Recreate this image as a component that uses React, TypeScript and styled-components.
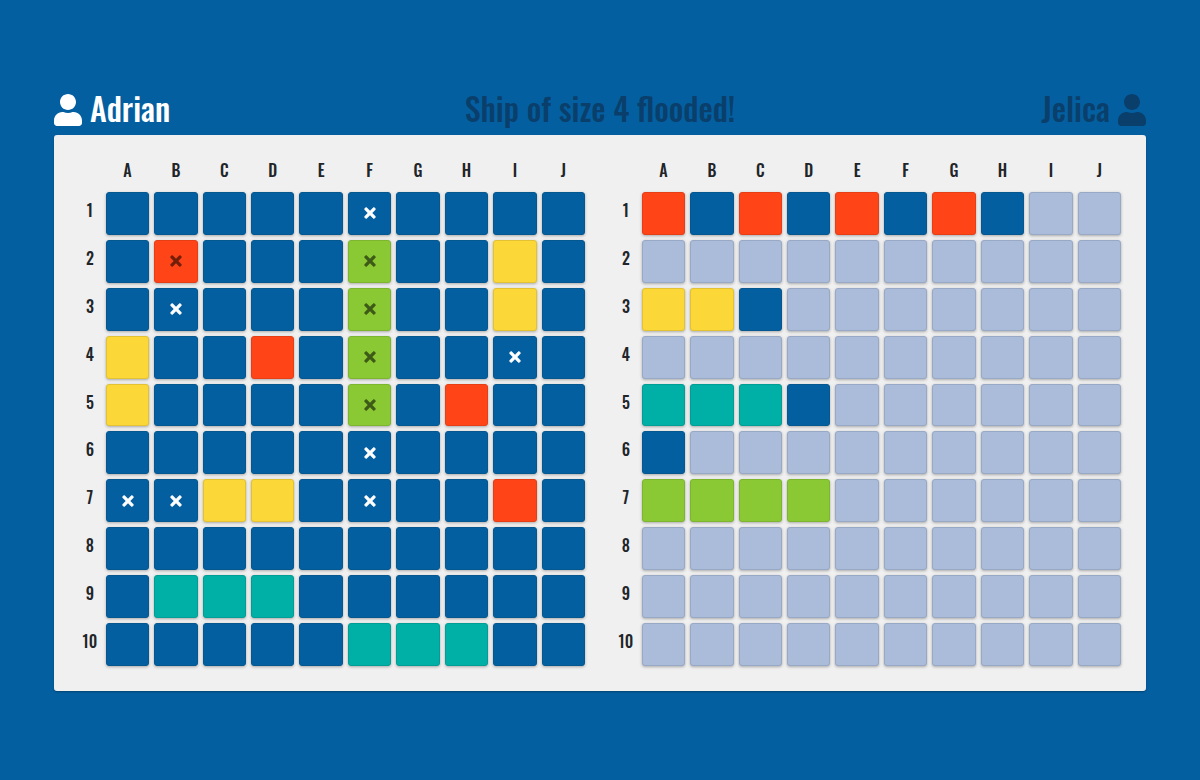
import React from "react";
import styled, { createGlobalStyle } from "styled-components";
import { FaTimes, FaUser } from "react-icons/fa";

type Tone = "sea" | "fog" | "red" | "gold" | "lime" | "teal";

const tones: Record<string, Tone> = {
  ".": "sea",
  "x": "sea",
  "_": "fog",
  r: "red",
  R: "red",
  y: "gold",
  l: "lime",
  L: "lime",
  t: "teal",
};

const colors: Record<Tone, string> = {
  sea: "#045fa1",
  fog: "#aabcd9",
  red: "#ff4517",
  gold: "#fbd838",
  lime: "#8bc934",
  teal: "#00afa5",
};

const borders: Record<Tone, string> = {
  sea: "#04588f",
  fog: "#98a9c6",
  red: "#e63e15",
  gold: "#e2c232",
  lime: "#7db52f",
  teal: "#009e95",
};

const letters = "ABCDEFGHIJ".split("");

const mine = [
  ".....x....",
  ".R...L..y.",
  ".x...L..y.",
  "y..r.L..x.",
  "y....L.r..",
  ".....x....",
  "xxyy.x..r.",
  "..........",
  ".ttt......",
  ".....ttt..",
];

const theirs = [
  "r.r.r.r.__",
  "__________",
  "yy._______",
  "__________",
  "ttt.______",
  "._________",
  "llll______",
  "__________",
  "__________",
  "__________",
];

const GlobalStyle = createGlobalStyle`
  html, body {
    margin: 0;
    height: 100%;
    background: #045fa1;
  }
  body {
    font-family: "Oswald", "Liberation Sans Narrow", "Roboto Condensed", "Roboto", "Liberation Sans", sans-serif;
  }
`;

const Page = styled.div`
  width: 1092px;
  margin: 0 auto;
  padding-top: 86px;
`;

const Header = styled.header`
  display: grid;
  grid-template-columns: 1fr auto 1fr;
  align-items: center;
  height: 48px;
  margin-bottom: 1px;
`;

const Player = styled.div<{ $away?: boolean }>`
  display: flex;
  align-items: center;
  gap: 8px;
  justify-content: ${(p) => (p.$away ? "flex-end" : "flex-start")};
  color: ${(p) => (p.$away ? "#0a3f6c" : "#ffffff")};

  svg {
    width: 28px;
    height: 32px;
  }
`;

const Name = styled.span`
  font-size: 32px;
  font-weight: 500;
  line-height: 40px;
  padding-bottom: 4px;
`;

const Title = styled(Name)`
  color: #0a3f6c;
`;

const Panel = styled.main`
  display: flex;
  gap: 30px;
  padding: 25px;
  background: #f0f0f0;
  border-radius: 3px;
  box-shadow: 0 1px 2px rgba(0, 0, 0, 0.3);
`;

const Board = styled.section`
  flex: 1;
  display: grid;
  grid-template-columns: 21.8px repeat(10, 1fr);
  grid-template-rows: 27px repeat(10, 42.9px);
  gap: 5px;
`;

const Label = styled.div`
  font-size: 16px;
  font-weight: 500;
  line-height: 20px;
  text-align: center;
  color: #212529;
`;

const RowLabel = styled(Label)`
  padding-top: 8px;
`;

const Cell = styled.div<{ $tone: Tone }>`
  display: flex;
  align-items: center;
  justify-content: center;
  box-sizing: border-box;
  background: ${(p) => colors[p.$tone]};
  border: 1px solid ${(p) => borders[p.$tone]};
  border-radius: 3px;
  box-shadow: 0 1px 3px rgba(0, 0, 0, 0.3);
  color: ${(p) => (p.$tone === "sea" ? "#ffffff" : "#000000")};

  svg {
    width: 12px;
    height: 16px;
    stroke: currentColor;
    stroke-width: 16;
    opacity: ${(p) => (p.$tone === "sea" ? 1 : 0.55)};
  }
`;

function Grid({ rows }: { rows: string[] }) {
  return (
    <Board>
      <div />
      {letters.map((l) => (
        <Label key={l}>{l}</Label>
      ))}
      {rows.map((row, y) => (
        <React.Fragment key={y}>
          <RowLabel>{y + 1}</RowLabel>
          {row.split("").map((c, x) => (
            <Cell key={x} $tone={tones[c]}>
              {(c === "x" || c === "R" || c === "L") && <FaTimes />}
            </Cell>
          ))}
        </React.Fragment>
      ))}
    </Board>
  );
}

export default function App() {
  return (
    <Page>
      <GlobalStyle />
      <Header>
        <Player>
          <FaUser />
          <Name>Adrian</Name>
        </Player>
        <Title>Ship of size 4 flooded!</Title>
        <Player $away>
          <Name>Jelica</Name>
          <FaUser />
        </Player>
      </Header>
      <Panel>
        <Grid rows={mine} />
        <Grid rows={theirs} />
      </Panel>
    </Page>
  );
}
